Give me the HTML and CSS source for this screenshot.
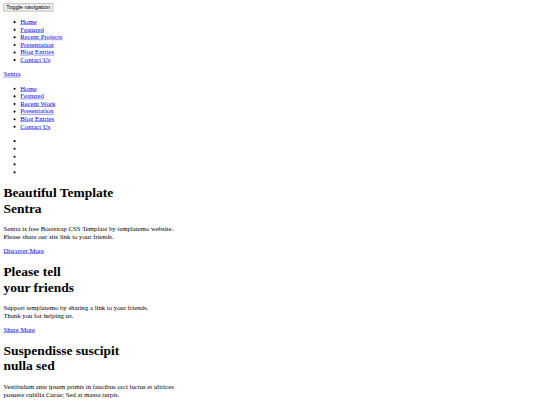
FILE: index.html
```html
<!DOCTYPE html>
<html lang="en">
<head>
<meta charset="utf-8">
<title>Sentra</title>
<link rel="stylesheet" href="styles.css">
</head>
<body class="viewport">
<div class="page">
<button class="toggle" type="button">Toggle navigation</button>
<ul class="menu">
  <li><a href="#home">Home</a></li>
  <li><a href="#featured">Featured</a></li>
  <li><a href="#projects">Recent Projects</a></li>
  <li><a href="#presentation">Presentation</a></li>
  <li><a href="#blog">Blog Entries</a></li>
  <li><a href="#contact">Contact Us</a></li>
</ul>
<div class="brand"><a href="#">Sentra</a></div>
<ul class="menu">
  <li><a href="#home">Home</a></li>
  <li><a href="#featured">Featured</a></li>
  <li><a href="#work">Recent Work</a></li>
  <li><a href="#presentation">Presentation</a></li>
  <li><a href="#blog">Blog Entries</a></li>
  <li><a href="#contact">Contact Us</a></li>
</ul>
<ul class="menu dots">
  <li></li>
  <li></li>
  <li></li>
  <li></li>
  <li></li>
</ul>
<div class="slide">
  <h1 class="title">Beautiful Template<br>Sentra</h1>
  <p class="text">Sentra is free Bootstrap CSS Template by templatemo website.<br>Please share our site link to your friends.</p>
  <a href="#">Discover More</a>
</div>
<div class="slide">
  <h1 class="title">Please tell<br>your friends</h1>
  <p class="text">Support templatemo by sharing a link to your friends.<br>Thank you for helping us.</p>
  <a href="#">Share More</a>
</div>
<div class="slide">
  <h1 class="title">Suspendisse suscipit<br>nulla sed</h1>
  <p class="text">Vestibulum ante ipsum primis in faucibus orci luctus et ultrices<br>posuere cubilia Curae; Sed at massa turpis.</p>
</div>
</div>
</body>
</html>
```

FILE: styles.css
```css
.viewport {
  margin: 0;
  background: #fff;
  overflow: hidden;
}
.page {
  width: 1264px;
  padding: 8px;
  transform: scale(0.421875);
  transform-origin: 0 0;
  font-family: "Liberation Serif", "Times New Roman", serif;
  font-size: 16px;
  color: #000;
}
.page a {
  color: #0000ee;
}
.toggle {
  font: 13.333px "Liberation Sans", Arial, sans-serif;
  color: #000;
  background: #efefef;
  border: 1px solid #767676;
  border-radius: 2px;
  padding: 1px 6px;
  margin: 0;
}
.menu {
  margin: 16px 0;
  padding-left: 40px;
}
.dots li {
  min-height: 1.149em;
}
.title {
  font-size: 32px;
  font-weight: bold;
  margin: 21.44px 0;
}
.text {
  margin: 16px 0;
}
```
